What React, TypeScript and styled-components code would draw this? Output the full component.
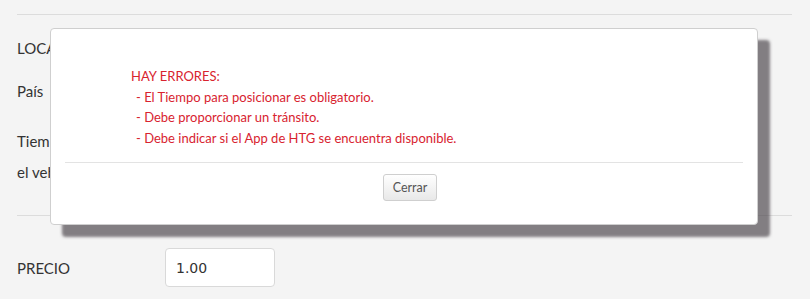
import * as React from 'react';
import styled, { createGlobalStyle } from 'styled-components';

const GlobalStyle = createGlobalStyle`
  body {
    margin: 0;
    background: #f4f4f4;
    font-family: Lato, 'Open Sans', sans-serif;
  }
`;

const Page = styled.div`
  position: relative;
  width: 810px;
  height: 299px;
  padding: 14px 18px 0 17px;
  box-sizing: border-box;
  overflow: hidden;
  color: #333;
`;

const Rule = styled.hr`
  border: 0;
  height: 1px;
  background: #dcdcdc;
  margin: 0;
`;

const Section = styled.div<{ $pad: string }>`
  padding: ${(p) => p.$pad};
`;

const Row = styled.div<{ $gap: number }>`
  display: flex;
  align-items: center;
  margin-bottom: ${(p) => p.$gap}px;
`;

const Label = styled.div<{ $lh?: number }>`
  width: 148px;
  font-size: 15px;
  line-height: ${(p) => p.$lh ?? 20}px;
`;

const Input = styled.div`
  width: 110px;
  height: 39px;
  box-sizing: border-box;
  border: 1px solid #d9d9d9;
  border-radius: 4px;
  background: #fff;
  padding: 0 10px;
  display: flex;
  align-items: center;
  font-family: 'DejaVu Sans', sans-serif;
  font-size: 14px;
  color: #333;
`;

const Modal = styled.div`
  position: absolute;
  left: 50px;
  top: 28px;
  width: 708px;
  height: 197px;
  box-sizing: border-box;
  background: #fff;
  border: 1px solid #cfcfcf;
  border-radius: 4px;
  box-shadow: 12px 12px 3px rgba(75, 70, 75, 0.68);
  padding: 0 14px;
`;

const Message = styled.div`
  padding: 37px 0 0 66px;
  height: 134px;
  box-sizing: border-box;
  color: #d8232f;
  font-size: 13px;
  line-height: 20.5px;
  border-bottom: 1px solid #e3e3e3;
`;

const Item = styled.div`
  padding-left: 5px;
`;

const Footer = styled.div`
  display: flex;
  justify-content: center;
  padding: 11px 0 0 12px;
`;

const Button = styled.button`
  height: 27px;
  width: 54px;
  border: 1px solid #cfcfcf;
  border-radius: 3px;
  background: linear-gradient(#ffffff, #e8e8e8);
  color: #555;
  font-family: Lato, sans-serif;
  font-size: 12.5px;
  padding: 0;
`;

const errors = [
  '- El Tiempo para posicionar es obligatorio.',
  '- Debe proporcionar un tránsito.',
  '- Debe indicar si el App de HTG se encuentra disponible.',
];

export default function App() {
  return (
    <>
      <GlobalStyle />
      <Page>
        <Rule />
        <Section $pad="23px 0 27px">
          <Row $gap={23}>
            <Label>LOCALIZACIÓN</Label>
          </Row>
          <Row $gap={25}>
            <Label>País</Label>
          </Row>
          <Row $gap={0}>
            <Label $lh={31}>
              Tiempo para
              <br />
              el vehículo
            </Label>
          </Row>
        </Section>
        <Rule />
        <Section $pad="32px 0 0">
          <Row $gap={0}>
            <Label>PRECIO</Label>
            <Input>1.00</Input>
          </Row>
        </Section>
        <Modal>
          <Message>
            <div>HAY ERRORES:</div>
            {errors.map((e) => (
              <Item key={e}>{e}</Item>
            ))}
          </Message>
          <Footer>
            <Button>Cerrar</Button>
          </Footer>
        </Modal>
      </Page>
    </>
  );
}
